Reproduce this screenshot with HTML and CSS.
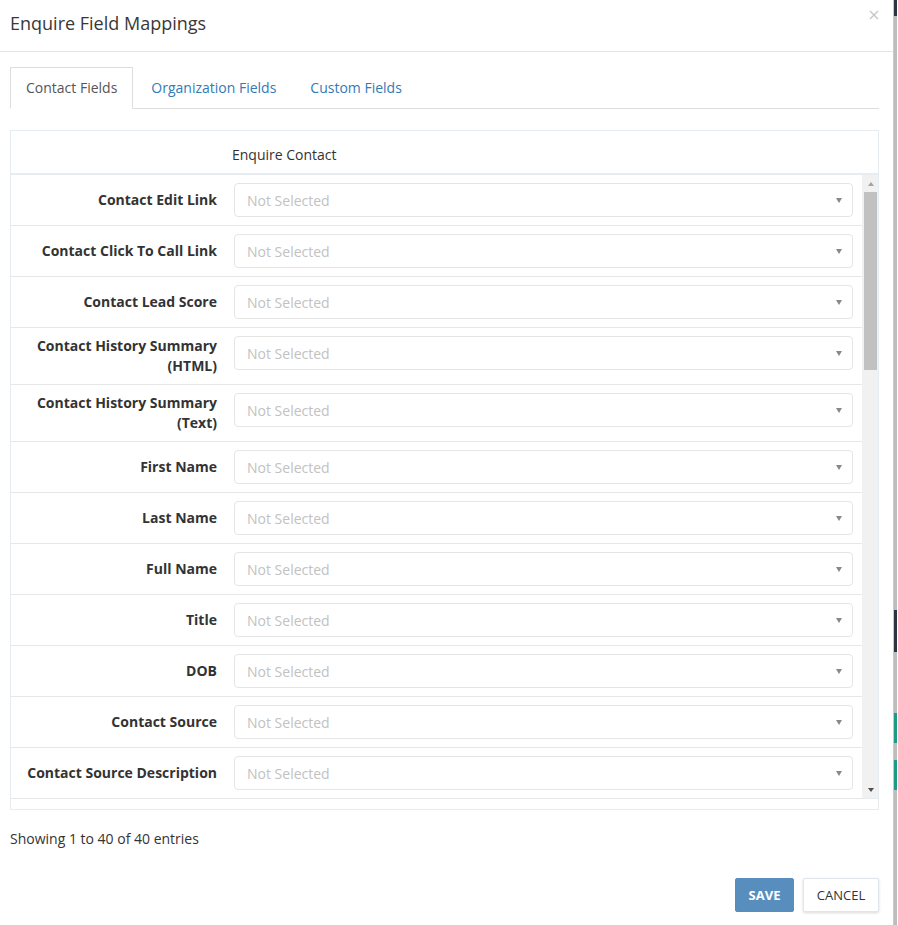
FILE: index.html
```html
<!DOCTYPE html>
<html lang="en">
<head>
<meta charset="utf-8">
<title>Enquire Field Mappings</title>
<link rel="stylesheet" href="styles.css">
</head>
<body>
<div class="screen">
  <div class="modal">
    <div class="modal-header">
      <h4 class="modal-title">Enquire Field Mappings</h4>
      <button class="close" aria-label="Close">
        <svg width="10" height="10" viewBox="0 0 10 10"><path d="M1 1L9 9M9 1L1 9" stroke="#c4c4c4" stroke-width="1.3" fill="none"/></svg>
      </button>
    </div>
    <div class="modal-body">
      <ul class="tabs">
        <li class="tab active">Contact Fields</li>
        <li class="tab">Organization Fields</li>
        <li class="tab">Custom Fields</li>
      </ul>

      <div class="grid">
        <div class="grid-head">
          <div class="col-label"></div>
          <div class="col-field">Enquire Contact</div>
        </div>
        <div class="grid-body">
          <div class="rows">
            <div class="row"><div class="col-label">Contact Edit Link</div><div class="col-field"><div class="select"><span>Not Selected</span><i class="caret"></i></div></div></div>
            <div class="row"><div class="col-label">Contact Click To Call Link</div><div class="col-field"><div class="select"><span>Not Selected</span><i class="caret"></i></div></div></div>
            <div class="row"><div class="col-label">Contact Lead Score</div><div class="col-field"><div class="select"><span>Not Selected</span><i class="caret"></i></div></div></div>
            <div class="row"><div class="col-label">Contact History Summary (HTML)</div><div class="col-field"><div class="select"><span>Not Selected</span><i class="caret"></i></div></div></div>
            <div class="row"><div class="col-label">Contact History Summary (Text)</div><div class="col-field"><div class="select"><span>Not Selected</span><i class="caret"></i></div></div></div>
            <div class="row"><div class="col-label">First Name</div><div class="col-field"><div class="select"><span>Not Selected</span><i class="caret"></i></div></div></div>
            <div class="row"><div class="col-label">Last Name</div><div class="col-field"><div class="select"><span>Not Selected</span><i class="caret"></i></div></div></div>
            <div class="row"><div class="col-label">Full Name</div><div class="col-field"><div class="select"><span>Not Selected</span><i class="caret"></i></div></div></div>
            <div class="row"><div class="col-label">Title</div><div class="col-field"><div class="select"><span>Not Selected</span><i class="caret"></i></div></div></div>
            <div class="row"><div class="col-label">DOB</div><div class="col-field"><div class="select"><span>Not Selected</span><i class="caret"></i></div></div></div>
            <div class="row"><div class="col-label">Contact Source</div><div class="col-field"><div class="select"><span>Not Selected</span><i class="caret"></i></div></div></div>
            <div class="row"><div class="col-label">Contact Source Description</div><div class="col-field"><div class="select"><span>Not Selected</span><i class="caret"></i></div></div></div>
          </div>
          <div class="scrollbar">
            <div class="sb-btn"><i class="arrow-up"></i></div>
            <div class="sb-thumb"></div>
            <div class="sb-track"></div>
            <div class="sb-btn"><i class="arrow-down"></i></div>
          </div>
        </div>
        <div class="grid-foot"></div>
      </div>

      <div class="info">Showing 1 to 40 of 40 entries</div>
    </div>
    <div class="modal-footer">
      <button class="btn btn-save">SAVE</button>
      <button class="btn btn-cancel">CANCEL</button>
    </div>
  </div>
  <div class="backdrop">
    <div class="bd bd-dark bd-top"></div>
    <div class="bd bd-grey bd-g1"></div>
    <div class="bd bd-dark bd-mid"></div>
    <div class="bd bd-grey bd-g2"></div>
    <div class="bd bd-green bd-gr1"></div>
    <div class="bd bd-grey bd-g3"></div>
    <div class="bd bd-green bd-gr2"></div>
    <div class="bd bd-grey bd-g4"></div>
  </div>
</div>
</body>
</html>
```

FILE: styles.css
```css
* { box-sizing: border-box; }

html, body {
  margin: 0;
  padding: 0;
  background: #ffffff;
}

body {
  font-family: "Open Sans", "Liberation Sans", sans-serif;
  font-size: 14px;
  color: #333333;
}

.screen {
  display: flex;
  width: 898px;
  height: 925px;
  overflow: hidden;
}

.modal {
  width: 894px;
  height: 925px;
  background: #ffffff;
  border-right: 1px solid #c9c9c9;
  display: flex;
  flex-direction: column;
}

.modal-header {
  height: 52px;
  border-bottom: 1px solid #e5e5e5;
  display: flex;
  align-items: flex-start;
  justify-content: space-between;
  padding: 0 14px 0 10px;
}

.modal-title {
  margin: 0;
  padding-top: 10px;
  font-size: 18px;
  font-weight: 400;
  line-height: 26px;
  color: #383838;
}

.close {
  border: 0;
  background: transparent;
  padding: 0;
  margin-top: 10px;
  width: 10px;
  height: 10px;
  display: flex;
}

.modal-body {
  padding: 15px 14px 0 10px;
}

.tabs {
  list-style: none;
  margin: 0;
  padding: 0;
  display: flex;
  border-bottom: 1px solid #dddddd;
  height: 42px;
}

.tab {
  padding: 0 15px;
  margin-right: 2px;
  height: 42px;
  line-height: 40px;
  font-size: 14px;
  color: #337ab7;
  border: 1px solid transparent;
}

.tab.active {
  color: #555555;
  border-color: #dddddd;
  border-bottom-color: #ffffff;
  background: #ffffff;
}

.grid {
  margin-top: 21px;
  border: 1px solid #e7ecf1;
}

.grid-head {
  display: flex;
  height: 44px;
  padding-top: 4px;
  border-bottom: 2px solid #e7ecf1;
  align-items: center;
}

.grid-head .col-field {
  padding-left: 7px;
  font-weight: 400;
  color: #333333;
}

.col-label {
  width: 214px;
  flex: 0 0 214px;
  text-align: right;
  padding: 0 8px 0 8px;
  font-weight: 700;
  line-height: 20px;
  color: #333333;
}

.col-field {
  flex: 1;
  padding: 0 9px;
}

.grid-body {
  height: 624px;
  display: flex;
  border-bottom: 1px solid #e7ecf1;
}

.rows {
  flex: 1;
  min-width: 0;
}

.row {
  display: flex;
  align-items: center;
  padding: 8px 0;
  border-bottom: 1px solid #e7e7e7;
}

.row .col-field {
  align-self: flex-start;
}

.scrollbar {
  width: 16px;
  flex: 0 0 16px;
  background: #f1f1f1;
  display: flex;
  flex-direction: column;
}

.sb-btn {
  height: 17px;
  display: flex;
  align-items: center;
  justify-content: center;
  padding-left: 1px;
}

.arrow-up {
  width: 0;
  height: 0;
  border-left: 3.5px solid transparent;
  border-right: 3.5px solid transparent;
  border-bottom: 4px solid #a3a3a3;
}

.arrow-down {
  width: 0;
  height: 0;
  border-left: 3.5px solid transparent;
  border-right: 3.5px solid transparent;
  border-top: 4px solid #505050;
}

.sb-thumb {
  height: 178px;
  margin: 0 1px 0 2px;
  background: #c1c1c1;
}

.sb-track {
  flex: 1;
}

.grid-foot {
  height: 10px;
}

.select {
  height: 34px;
  border: 1px solid #e5e5e5;
  border-radius: 4px;
  display: flex;
  align-items: center;
  justify-content: space-between;
  padding: 0 10px 0 12px;
  color: #c2c2c2;
  font-size: 14px;
}

.caret {
  width: 0;
  height: 0;
  border-left: 3.5px solid transparent;
  border-right: 3.5px solid transparent;
  border-top: 5px solid #888888;
}

.info {
  margin-top: 19px;
  line-height: 20px;
  font-size: 14px;
  color: #333333;
}

.modal-footer {
  display: flex;
  justify-content: flex-end;
  gap: 9px;
  padding: 29px 14px 0 10px;
}

.btn {
  height: 34px;
  font-family: "Open Sans", "Liberation Sans", sans-serif;
  font-size: 13px;
  border-radius: 2px;
  cursor: pointer;
}

.btn-save {
  width: 59px;
  background: #578ebe;
  border: 1px solid #578ebe;
  color: #ffffff;
  font-weight: 700;
}

.btn-cancel {
  width: 76px;
  background: #ffffff;
  border: 1px solid #e1e5ec;
  color: #333333;
  box-shadow: 0 1px 3px rgba(0, 0, 0, 0.15);
}

.backdrop {
  width: 3px;
  display: flex;
  flex-direction: column;
}

.bd { width: 3px; }
.bd-dark { background: #2b3440; }
.bd-grey { background: #bdbdbd; }
.bd-green { background: #1f9a84; }
.bd-top { height: 16px; }
.bd-g1 { height: 594px; }
.bd-mid { height: 42px; }
.bd-g2 { height: 61px; }
.bd-gr1 { height: 30px; }
.bd-g3 { height: 17px; }
.bd-gr2 { height: 30px; }
.bd-g4 { flex: 1; }
```
